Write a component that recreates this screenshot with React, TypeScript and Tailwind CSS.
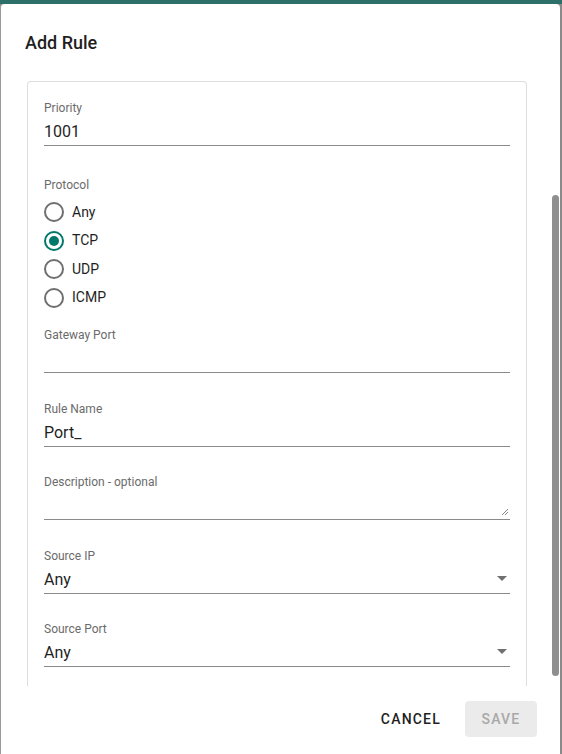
import React from "react";

const font = { fontFamily: "Roboto, 'Liberation Sans', sans-serif" };

function Field({ label, value, select, resize, mt }: { label: string; value?: string; select?: boolean; resize?: boolean; mt: string }) {
  return (
    <div className={`${mt} relative border-b border-[#8a8a8a]`}>
      <div className="text-[12px] leading-[14px] text-[#6b6b6b]">{label}</div>
      <div className="h-[24px] mt-[6px] text-[16px] leading-[22px] text-[#1f1f1f]">{value}</div>
      {select && (
        <svg className="absolute right-[3px] bottom-[12px]" width="10" height="5" viewBox="0 0 10 5">
          <path d="M0 0h10L5 5z" fill="#707070" />
        </svg>
      )}
      {resize && (
        <svg className="absolute right-[1px] bottom-[3px]" width="8" height="8" viewBox="0 0 8 8">
          <path d="M1 7L7 1M4 7L7 4" stroke="#666" strokeWidth="0.8" />
        </svg>
      )}
    </div>
  );
}

function Radio({ label, checked }: { label: string; checked?: boolean }) {
  return (
    <div className="flex items-center h-[28.5px]">
      <div className={`w-[20px] h-[20px] rounded-full border-2 flex items-center justify-center ${checked ? "border-[#00796b]" : "border-[#6f6f6f]"}`}>
        {checked && <div className="w-[10px] h-[10px] rounded-full bg-[#00796b]" />}
      </div>
      <span className="ml-[8px] text-[14px] text-[#1f1f1f]">{label}</span>
    </div>
  );
}

export default function App() {
  return (
    <div className="w-[562px] h-[754px] bg-[#8a8a8a] overflow-hidden" style={font}>
      <div className="h-[4px] bg-[#2d6f69]" />
      <div className="relative h-[750px] mr-[2px] bg-white rounded-t-[4px] border-l border-[#9a9a9a] flex flex-col">
        <div className="px-[24px] pt-[29px] pb-[20px] text-[18px] font-medium text-[#1f1f1f] leading-[20px]">Add Rule</div>
        <div className="flex-1 overflow-hidden pl-[26px] pr-[33px] pt-[8px]">
          <div className="border border-b-0 border-[#dedede] rounded-t-[4px] px-[16px] pt-[19px] h-[620px]">
            <Field label="Priority" value="1001" mt="mt-0" />
            <div className="mt-[32px] text-[12px] leading-[14px] text-[#6b6b6b]">Protocol</div>
            <div className="mt-[6px]">
              <Radio label="Any" />
              <Radio label="TCP" checked />
              <Radio label="UDP" />
              <Radio label="ICMP" />
            </div>
            <Field label="Gateway Port" mt="mt-[16px]" />
            <Field label="Rule Name" value="Port_" mt="mt-[29px]" />
            <Field label="Description - optional" mt="mt-[28px]" resize />
            <Field label="Source IP" value="Any" select mt="mt-[29px]" />
            <Field label="Source Port" value="Any" select mt="mt-[28px]" />
          </div>
        </div>
        <div className="h-[68px] flex items-center justify-end gap-[12px] pr-[23px] pb-[2px]">
          <button className="px-[12px] h-[36px] text-[14px] font-medium tracking-[1.2px] text-[#1f1f1f]">CANCEL</button>
          <button className="w-[72px] h-[36px] rounded-[4px] bg-[#ebebeb] text-[14px] font-medium tracking-[1.2px] text-[#a8a8a8]">SAVE</button>
        </div>
        <div className="absolute right-[1px] top-[191px] w-[7px] h-[481px] rounded-full bg-[#8f8f8f]" />
      </div>
    </div>
  );
}
